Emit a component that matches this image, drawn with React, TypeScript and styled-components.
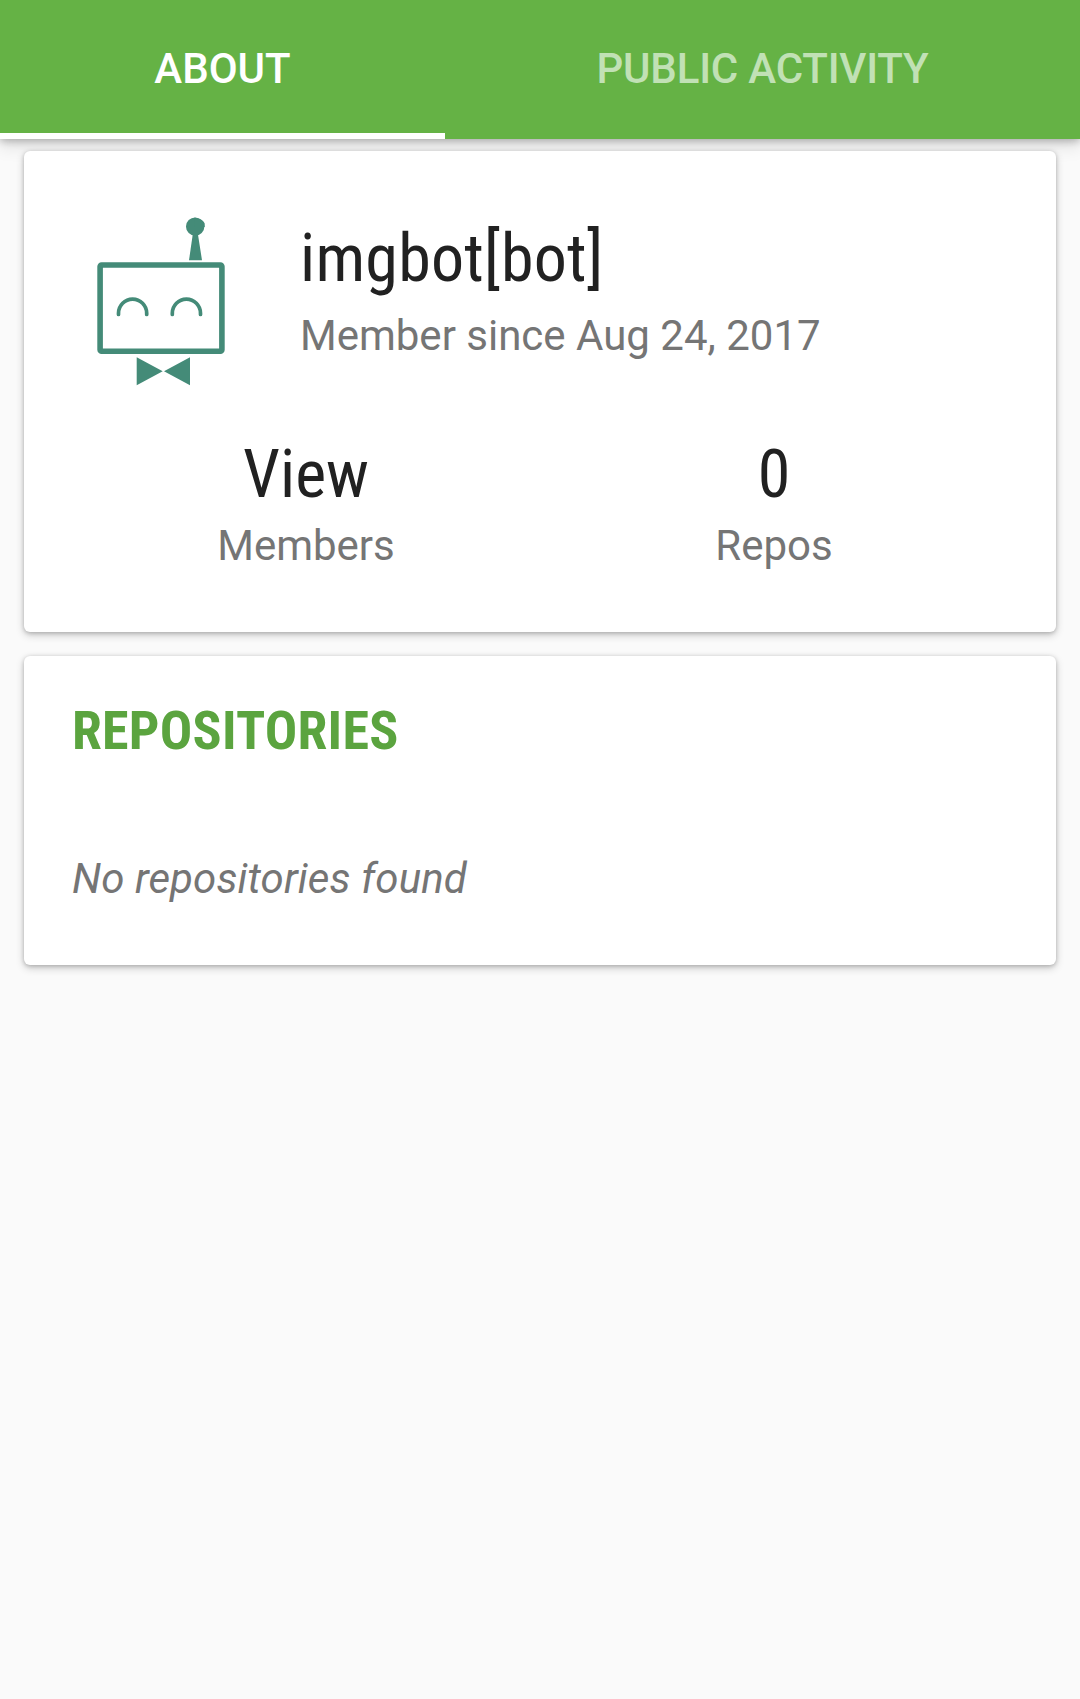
import React from "react";
import styled, { createGlobalStyle } from "styled-components";

const Global = createGlobalStyle`
  * { box-sizing: border-box; }
  body { margin: 0; background: #fafafa; font-family: Roboto, sans-serif; }
`;
const Page = styled.main`
  min-height: 1699px;
  background: #fafafa;
`;
const Tabs = styled.nav`
  display: flex;
  height: 139px;
  background: #65b245;
  box-shadow: 0 8px 16px rgba(0, 0, 0, 0.1), 0 2px 8px rgba(0, 0, 0, 0.26);
`;
const Tab = styled.div<{ $width: number; $active?: boolean }>`
  width: ${(p) => p.$width}px;
  height: 139px;
  display: flex;
  align-items: center;
  justify-content: center;
  border-bottom: 6px solid ${(p) => (p.$active ? "#fff" : "transparent")};
  padding-top: 4px;
  color: ${(p) => (p.$active ? "#fff" : "#c1e1b5")};
  font-size: 42px;
  font-weight: 500;
  letter-spacing: ${(p) => (p.$active ? 0 : "-0.2px")};
  white-space: nowrap;
`;
const Content = styled.div`
  display: flex;
  flex-direction: column;
  gap: 24px;
  padding: 12px 24px;
`;
const Card = styled.section<{ $height: number }>`
  height: ${(p) => p.$height}px;
  background: #fff;
  border-radius: 6px;
  box-shadow: 0 3px 8px rgba(0, 0, 0, 0.2), 0 1px 4px rgba(0, 0, 0, 0.2);
`;
const Profile = styled.header`
  display: flex;
  height: 264px;
  padding: 60px 0 0 66px;
`;
const Avatar = styled.svg`
  width: 144px;
  height: 180px;
  flex: none;
`;
const Identity = styled.div`
  display: flex;
  flex-direction: column;
  gap: 13px;
  padding: 9px 0 0 66px;
`;
const Headline = styled.div<{ $spacing?: number }>`
  font-family: "Roboto Condensed", Roboto, sans-serif;
  font-stretch: 75%;
  font-size: 66px;
  line-height: 78px;
  letter-spacing: ${(p) => p.$spacing ?? 0}px;
  color: #212121;
`;
const Caption = styled.div`
  font-size: 42px;
  line-height: 50px;
  color: #757575;
  white-space: nowrap;
`;
const Stats = styled.div`
  display: grid;
  grid-template-columns: 1fr 1fr;
  padding: 21px 48px 0;
  text-align: center;
`;
const Stat = styled.div`
  display: flex;
  flex-direction: column;
  gap: 7px;
`;
const Section = styled.div`
  padding: 43px 48px;
`;
const Title = styled.h2`
  margin: 0;
  font-family: "Roboto Condensed", Roboto, sans-serif;
  font-stretch: 75%;
  font-size: 54px;
  line-height: 64px;
  font-weight: 700;
  letter-spacing: 0.22px;
  color: #5ba43f;
`;
const Empty = styled.p`
  margin: 91px 0 0;
  font-size: 42px;
  line-height: 50px;
  font-style: italic;
  letter-spacing: 0.1px;
  color: #757575;
`;

const Robot = () => (
  <Avatar viewBox="90 211 144 180" fill="none" stroke="#448b78">
    <rect x="100.1" y="265" width="121.8" height="86.2" rx="1.5" strokeWidth="5.6" />
    <path
      d="M118.500 314.400v-1.200a14.100 14.100 0 0 1 28.200 0v1.200M172.300 314.400v-1.200a14.100 14.100 0 0 1 28.200 0v1.200"
      strokeWidth="3.7"
      strokeLinecap="round"
    />
    <g fill="#448b78" stroke="none">
      <circle cx="195.2" cy="226.6" r="9.2" />
      <path d="M194.500 217.400L198.500 219Q203 219.500 204.700 223.500V227L195 227Z" />
      <path d="M192.700 234.800h5.300l4 25.500h-13z" />
      <path d="M136.700 357.300l26 14-26 14zM190 357.300l-26 14 26 14z" />
    </g>
  </Avatar>
);

export default function App() {
  return (
    <Page>
      <Global />
      <Tabs>
        <Tab $width={445} $active>ABOUT</Tab>
        <Tab $width={635}>PUBLIC ACTIVITY</Tab>
      </Tabs>
      <Content>
        <Card $height={481}>
          <Profile>
            <Robot />
            <Identity>
              <Headline $spacing={0.25}>imgbot[bot]</Headline>
              <Caption>Member since Aug 24, 2017</Caption>
            </Identity>
          </Profile>
          <Stats>
            <Stat>
              <Headline>View</Headline>
              <Caption>Members</Caption>
            </Stat>
            <Stat>
              <Headline>0</Headline>
              <Caption>Repos</Caption>
            </Stat>
          </Stats>
        </Card>
        <Card $height={309}>
          <Section>
            <Title>REPOSITORIES</Title>
            <Empty>No repositories found</Empty>
          </Section>
        </Card>
      </Content>
    </Page>
  );
}
